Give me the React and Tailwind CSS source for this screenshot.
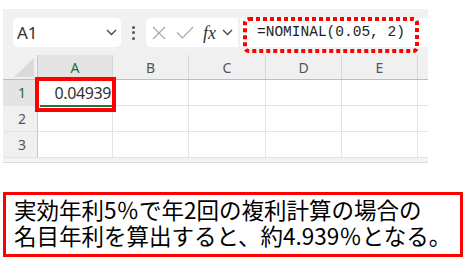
const cols = [
  { key: 'A', w: 'w-[75px]', sel: true },
  { key: 'B', w: 'w-[76px]' },
  { key: 'C', w: 'w-[77px]' },
  { key: 'D', w: 'w-[76px]' },
  { key: 'E', w: 'w-[76px]' },
];

function Chevron({ className }) {
  return (
    <svg className={className} width="11" height="7" viewBox="0 0 11 7" fill="none">
      <path d="M1 1l4.5 4.5L10 1" stroke="#444" strokeWidth="1.3" />
    </svg>
  );
}

function Row({ n, value }) {
  return (
    <div className="flex h-[26px]">
      <div
        className={
          'w-[35px] shrink-0 flex items-center pl-[15px] text-[14px] border-r border-[#c8c8c8] border-b border-b-[#e3e3e3] ' +
          (value ? 'bg-[#e4e4e4] text-[#1d6b40]' : 'bg-[#f0f0f0] text-[#555]')
        }
      >
        {n}
      </div>
      {cols.map((c) => (
        <div
          key={c.key}
          className={c.w + ' shrink-0 bg-white border-r border-b border-[#e3e3e3] flex items-center justify-end pr-[1px] text-[16px] tracking-[-0.4px] text-[#333]'}
        >
          {c.sel && value}
        </div>
      ))}
      <div className="flex-1 bg-white border-b border-[#e3e3e3]" />
    </div>
  );
}

export default function App() {
  return (
    <div className="w-[469px] h-[264px] bg-white overflow-hidden pt-[9px]" style={{ fontFamily: '"Noto Sans", "Open Sans", sans-serif' }}>
      <div className="relative ml-[3px] w-[425px] bg-[#f1f1f1]">
        {/* toolbar */}
        <div className="flex items-center pt-[9px] pb-[8px] pl-[10px]">
          <div className="w-[108px] h-[29px] bg-white rounded-[5px] flex items-center justify-between pl-[4px] pr-[4px]">
            <span className="text-[17px] text-[#333] leading-none">A1</span>
            <Chevron />
          </div>
          <div className="w-[25px] flex flex-col items-center gap-[2.5px]">
            <span className="w-[3px] h-[3px] rounded-full bg-[#555]" />
            <span className="w-[3px] h-[3px] rounded-full bg-[#555]" />
            <span className="w-[3px] h-[3px] rounded-full bg-[#555]" />
          </div>
          <div className="w-[92px] h-[29px] bg-white rounded-l-[5px] flex items-center pl-[6px]">
            <svg width="14" height="14" viewBox="0 0 14 14" fill="none">
              <path d="M1 1l12 12M13 1L1 13" stroke="#a8a8a8" strokeWidth="1.2" />
            </svg>
            <svg className="ml-[10px]" width="18" height="13" viewBox="0 0 18 13" fill="none">
              <path d="M1 6.5l5.5 5.5L17 1" stroke="#a8a8a8" strokeWidth="1.2" />
            </svg>
            <span className="ml-[9px] text-[18px] italic text-[#333] leading-none" style={{ fontFamily: '"Liberation Serif", serif' }}>fx</span>
            <Chevron className="ml-[6px]" />
          </div>
          <div className="flex-1 ml-[2px] h-[29px] bg-white flex items-center pl-[17px]">
            <span className="text-[14.5px] text-[#222] leading-none" style={{ fontFamily: '"Liberation Mono", monospace' }}>=NOMINAL(0.05, 2)</span>
          </div>
        </div>

        {/* header row */}
        <div className="flex h-[25px] border-b border-[#bdbdbd]">
          <div className="w-[35px] shrink-0 bg-[#f0f0f0] border-r border-[#c8c8c8] relative">
            <svg className="absolute right-[3px] bottom-[2px]" width="20" height="19" viewBox="0 0 20 19">
              <path d="M20 0V19H0Z" fill="#dadada" />
            </svg>
          </div>
          {cols.map((c) => (
            <div
              key={c.key}
              className={
                c.w +
                ' shrink-0 border-r border-[#d6d6d6] flex items-center justify-center text-[14px] ' +
                (c.sel ? 'bg-[#e4e4e4] text-[#1d6b40]' : 'bg-[#f0f0f0] text-[#555]')
              }
            >
              {c.key}
            </div>
          ))}
          <div className="flex-1 bg-[#f0f0f0]" />
        </div>

        <Row n="1" value="0.04939" />
        <Row n="2" />
        <Row n="3" />
        <div className="h-[5px] bg-[#f3f3f3] border-b border-[#dcdcdc]" />

        {/* green cursor line under A1 */}
        <div className="absolute left-[37px] top-[96px] w-[72px] h-[1.5px] bg-[#1d7a46]" />

        {/* annotations */}
        <svg className="absolute left-[240px] top-[8px]" width="176" height="36" viewBox="0 0 176 36" fill="none">
          <rect x="2" y="2" width="172" height="32" rx="4" stroke="#ff0000" strokeWidth="4" strokeDasharray="4 3" />
        </svg>
        <div className="absolute left-[32px] top-[68px] w-[81px] h-[35px] border-4 border-[#ff0000]" />
      </div>

      <div
        className="mt-[29px] ml-[3px] w-[460px] border-[3px] border-[#ff0000] pl-[8px] pt-[1px] pb-[6px] text-[22.5px] leading-[26px] text-black whitespace-nowrap"
        style={{ fontFamily: '"Noto Sans CJK JP", sans-serif' }}
      >
        <div>実効年利5％で年2回の複利計算の場合の</div>
        <div>名目年利を算出すると、約4.939％となる。</div>
      </div>
    </div>
  );
}
